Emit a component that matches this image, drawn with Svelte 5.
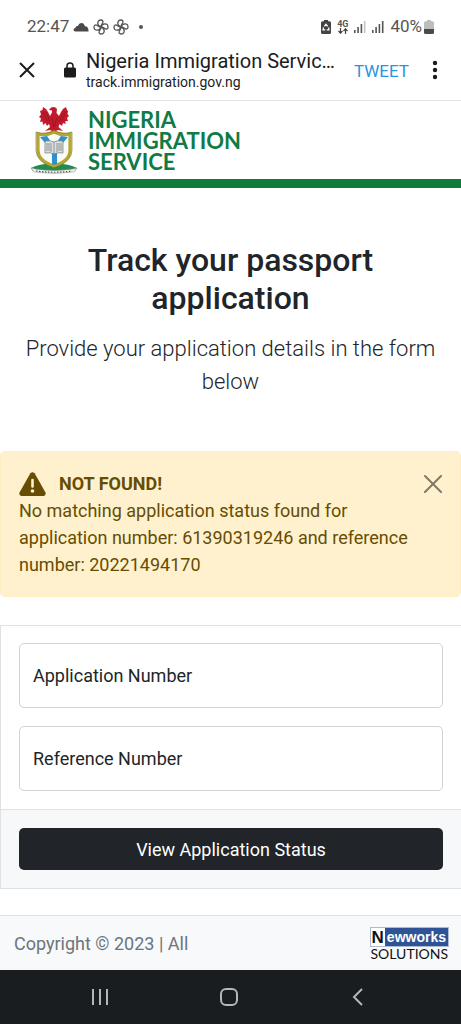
<script>
  let applicationNumber = $state('')
  let referenceNumber = $state('')
  let showAlert = $state(true)
  const bars = [3, 6, 9, 12]
</script>

{#snippet fan()}
  <svg viewBox="0 0 16 16" width="16" height="16" fill="none" stroke="#555" stroke-width="1.3" stroke-linejoin="round">
    {#each [0, 90, 180, 270] as angle}
      <path transform="rotate({angle} 8 8)" d="M8 8C6 7.500 4.800 6 4.800 4C4.800 2 6 1 8 1C9.800 1 10.300 2.300 9.800 3.600C9.300 5 8 5.600 8 8Z" />
    {/each}
  </svg>
{/snippet}

{#snippet signal(weak)}
  <svg viewBox="0 0 12 13" width="12" height="13" fill="#555">
    {#each bars as height, i}
      <rect x={i * 3.3} y={13 - height} width="1.6" {height} opacity={weak && i === 3 ? 0.35 : 1} />
    {/each}
  </svg>
{/snippet}

<div class="status">
  <div class="status-group">
    <span>22:47</span>
    <svg viewBox="0 0 16 10" width="16" height="10" fill="#4a4a4a"><path d="M2.500 9.500C0 9.500 0 6.300 2.300 6C2.500 4.200 4 3.600 5 4C6.200-.3 11.300.2 11.800 4.300C14 4.100 15.600 6 15.600 9.500Z" /></svg>
    {@render fan()}
    {@render fan()}
    <i class="dot"></i>
  </div>
  <div class="status-group right">
    <svg viewBox="0 0 10 14" width="10" height="14">
      <path fill="#444" d="M3 0h4v1.300h1.500Q10 1.300 10 2.800v9.700Q10 14 8.500 14h-7Q0 14 0 12.500V2.800Q0 1.300 1.500 1.300H3Z" />
      <path fill="none" stroke="#fff" stroke-width="1.200" d="M3.300 6.300L5 4.200L6.700 6.300M7.600 7.400L8 9.800H5.800M4.300 9.800H2L2.500 7.400" />
    </svg>
    <span class="network">
      <b>4G</b>
      <svg viewBox="0 0 10 6" width="10" height="6" fill="none" stroke="#444" stroke-width="1.200"><path d="M2.500 0v5M.5 3l2 2.200L4.500 3M7.500 6V1M5.500 3l2-2.200L9.500 3" /></svg>
    </span>
    {@render signal(true)}
    {@render signal(false)}
    <span class="battery">
      40%
      <svg viewBox="0 0 10 14" width="10" height="14">
        <path fill="#bdbdbd" d="M3 0h4v1.300h1.500Q10 1.300 10 2.800V9H0V2.800Q0 1.300 1.500 1.300H3Z" />
        <path fill="#4a4a4a" d="M0 9h10v3.500Q10 14 8.500 14h-7Q0 14 0 12.500Z" />
      </svg>
    </span>
  </div>
</div>

<div class="toolbar">
  <button class="icon-btn" aria-label="Close tab">
    <svg viewBox="0 0 16 16" width="16" height="16" fill="none" stroke="#1c1c1e" stroke-width="2"><path d="M1 1l14 14M15 1L1 15" /></svg>
  </button>
  <svg class="lock" viewBox="0 0 12 16" width="12" height="16">
    <path fill="none" stroke="#1c1c1e" stroke-width="1.500" d="M3 7V4a3 3 0 0 1 6 0v3" />
    <rect y="5.500" width="12" height="10" rx="1.500" fill="#1c1c1e" />
  </svg>
  <div class="page-info">
    <div class="page-title">Nigeria Immigration Servic…</div>
    <div class="page-url">track.immigration.gov.ng</div>
  </div>
  <button class="tweet">TWEET</button>
  <button class="icon-btn" aria-label="More options">
    <svg viewBox="0 0 6 20" width="6" height="20" fill="#1c1c1e"><circle cx="3" cy="3" r="2.200" /><circle cx="3" cy="10" r="2.200" /><circle cx="3" cy="17" r="2.200" /></svg>
  </button>
</div>

<header>
  <svg viewBox="0 0 48 68" width="48" height="68">
    <!-- eagle -->
    <path fill="#c3192b" d="M19 4L21 1.500Q25 0 27 3L26.500 7L29 10L31 6L33 3L36 1L37 4L38 5L37.500 8L39 10L37 12L38 15L35.500 15L35.500 18L33 17L32 20L29.500 18L28.500 21L33 25L28 24L24 26L20 24L15 25L20 21L19 18L17 20L15.500 17L13 19L12.500 15.500L10 16L11 12.500L9 11L11 8.500L10 5L12.500 4L13 1L16 3L18 6L20 10L22 6.500L22 4.500Z" />
    <path fill="none" stroke="#8a1522" stroke-width=".7" d="M13 6l4 9M16 6l4 10M36 5l-4 10M33 7l-4 9M22 12l2 9l3-9" />
    <path fill="#238b50" d="M1 62Q12 57 24 58Q36 57 47 62L45 65H3Z" />
    <!-- shield -->
    <path fill="#f8fbf8" stroke="#b7a62d" stroke-width="3.200" d="M8 28Q16 30 24 26Q32 30 40 28V44Q40 55 24 60Q8 55 8 44Z" />
    <path fill="none" stroke="#69732e" stroke-width=".6" d="M6 26Q16 29 24 24.500Q32 29 42 26V44Q42 56 24 62Q6 56 6 44Z" />
    <path fill="#2c91ce" d="M10 31L17 30L21 36L16 38ZM38 31L31 30L27 36L32 38ZM22 47h5v11l-3 1l-2-1Z" />
    <path fill="#dde0df" stroke="#707575" stroke-width=".7" d="M15 35Q20 34 24 36Q28 34 33 35V47Q28 46 24 48Q20 46 15 47Z" />
    <path fill="none" stroke="#7b8080" stroke-width=".8" d="M24 36v12M17 37v8M19 37v8M21 37v9M27 37v9M29 37v8M31 37v8" />
    <path fill="#f2f2ef" stroke="#888" stroke-width=".5" d="M1 62Q3 62 5 63Q24 66 43 63L47 62L44 66Q24 69 4 66Z" />
    <path fill="none" stroke="#555" stroke-width="1.200" stroke-dasharray="1.500 1.500" d="M6 65Q24 67.500 42 65" />
  </svg>
  <div class="brand">NIGERIA<br />IMMIGRATION<br />SERVICE</div>
</header>

<main>
  <section class="intro">
    <h1>Track your passport application</h1>
    <p>Provide your application details in the form below</p>
  </section>

  {#if showAlert}
    <div class="alert" role="alert">
      <div class="alert-head">
        <svg viewBox="0 0 27 24" width="27" height="24">
          <path fill="#664d03" d="M11.400 1.300Q13.500-.9 15.600 1.300L26.500 20.500Q27.300 23.500 24.600 24H2.400Q-.3 23.500.5 20.500Z" />
          <path stroke="#fff3cd" stroke-width="2.600" stroke-linecap="round" d="M13.500 8v6.500" />
          <circle cx="13.500" cy="19" r="1.800" fill="#fff3cd" />
        </svg>
        <strong>NOT FOUND!</strong>
        <button class="icon-btn dismiss" aria-label="Close" onclick={() => showAlert = false}>
          <svg viewBox="0 0 18 18" width="18" height="18" fill="none" stroke="#807966" stroke-width="2" stroke-linecap="round"><path d="M1 1l16 16M17 1L1 17" /></svg>
        </button>
      </div>
      <p>No matching application status found for application number: 61390319246 and reference number: 20221494170</p>
    </div>
  {/if}

  <form class="card" onsubmit={(e) => e.preventDefault()}>
    <div class="card-body">
      <div class="field">
        <input id="application" type="text" bind:value={applicationNumber} />
        <label for="application" class:filled={applicationNumber}>Application Number</label>
      </div>
      <div class="field">
        <input id="reference" type="text" bind:value={referenceNumber} />
        <label for="reference" class:filled={referenceNumber}>Reference Number</label>
      </div>
    </div>
    <div class="card-footer">
      <button class="submit">View Application Status</button>
    </div>
  </form>
</main>

<footer>
  <span>Copyright © 2023 | All</span>
  <div class="newworks">
    <div class="newworks-top"><b>N</b><span>ewworks</span></div>
    <div class="newworks-bottom">SOLUTIONS</div>
  </div>
</footer>

<nav>
  <button class="icon-btn" aria-label="Recent apps">
    <svg viewBox="0 0 18 18" width="18" height="18" stroke="#b4b6b7" stroke-width="2"><path d="M2 1v16M9 1v16M16 1v16" /></svg>
  </button>
  <button class="icon-btn" aria-label="Home">
    <svg viewBox="0 0 20 20" width="20" height="20" fill="none" stroke="#b4b6b7" stroke-width="2"><rect x="2" y="2" width="16" height="16" rx="5" /></svg>
  </button>
  <button class="icon-btn" aria-label="Back">
    <svg viewBox="0 0 18 18" width="18" height="18" fill="none" stroke="#b4b6b7" stroke-width="2"><path d="M13 1L5 9l8 8" /></svg>
  </button>
</nav>

<style>
  :global(body) {
    margin: 0;
    background: #fff;
    color: #212529;
    font: 18px/27px Roboto, sans-serif;
  }
  button, input {
    font: inherit;
  }
  p {
    margin: 0;
  }
  svg {
    display: block;
    flex-shrink: 0;
  }
  .icon-btn {
    display: flex;
    align-items: center;
    justify-content: center;
    padding: 0;
    border: 0;
    background: none;
  }
  .status {
    display: flex;
    justify-content: space-between;
    padding: 13px 27px 0;
    color: #555;
    font-size: 17px;
  }
  .status-group {
    display: flex;
    align-items: center;
    gap: 4px;
  }
  .status-group.right {
    gap: 6px;
  }
  .dot {
    width: 4px;
    height: 4px;
    margin-left: 6px;
    border-radius: 50%;
    background: #555;
  }
  .network {
    display: flex;
    flex-direction: column;
    align-items: center;
    font-size: 9px;
    line-height: 8px;
  }
  .battery {
    display: flex;
    align-items: center;
    gap: 2px;
  }
  .toolbar {
    display: flex;
    align-items: center;
    height: 60px;
    padding: 0 23px 0 19px;
    border-bottom: 1px solid #e4e6e6;
    color: #1c1c1e;
  }
  .lock {
    margin: 0 10px 0 29px;
  }
  .page-info {
    flex: 1;
    min-width: 0;
  }
  .page-title {
    overflow: hidden;
    font-size: 20px;
    line-height: 24px;
    white-space: nowrap;
  }
  .page-url {
    font-size: 14px;
    line-height: 18px;
  }
  .tweet {
    margin-right: 23px;
    padding: 2px 0 0;
    border: 0;
    background: none;
    color: #2a94e0;
    font-size: 17px;
  }
  header {
    display: flex;
    align-items: center;
    gap: 10px;
    height: 78px;
    padding: 0 30px;
    border-bottom: 9px solid #0f7b3a;
  }
  .brand {
    color: #0f7b45;
    font: 700 22px/21px Lato, sans-serif;
  }
  .intro {
    padding: 53px 18px;
    text-align: center;
  }
  h1 {
    margin: 0 0 15px;
    font-size: 32px;
    font-weight: 500;
    line-height: 38px;
  }
  .intro p {
    font-size: 22px;
    font-weight: 300;
    line-height: 33px;
  }
  .alert {
    margin-bottom: 28px;
    padding: 18px;
    border: 1px solid #ffecc0;
    border-radius: 5px;
    background: #fff1cd;
    color: #664d03;
  }
  .alert p {
    padding-right: 27px;
  }
  .alert-head {
    display: flex;
    align-items: center;
    gap: 13px;
  }
  .alert-head strong {
    font-weight: 700;
  }
  .dismiss {
    margin-left: auto;
  }
  .card {
    border: 1px solid #dfe1e3;
    border-right: 0;
  }
  .card-body {
    display: grid;
    gap: 18px;
    padding: 17px 18px 18px;
  }
  .field {
    display: grid;
  }
  .field > * {
    grid-area: 1 / 1;
  }
  .field input {
    box-sizing: border-box;
    width: 100%;
    height: 65px;
    padding: 0 14px;
    border: 1px solid #ced4da;
    border-radius: 5px;
    background: #fff;
    color: #212529;
  }
  .field label {
    align-self: center;
    padding-left: 14px;
    pointer-events: none;
  }
  .field label.filled {
    visibility: hidden;
  }
  .card-footer {
    padding: 18px;
    border-top: 1px solid #dfe1e3;
    background: #f7f8fa;
  }
  .submit {
    width: 100%;
    height: 42px;
    border: 0;
    border-radius: 5px;
    background: #212529;
    color: #fff;
  }
  footer {
    display: flex;
    align-items: center;
    justify-content: space-between;
    height: 54px;
    margin-top: 26px;
    padding: 0 12px 0 14px;
    border-top: 1px solid #dfe1e3;
    background: #f8f9fa;
    color: #6c757d;
  }
  .newworks {
    padding-top: 2px;
    color: #111;
    font-family: "Liberation Sans", Arial, sans-serif;
  }
  .newworks-top {
    display: flex;
    height: 20px;
    border: 1px solid #aebbd5;
    box-sizing: border-box;
    background: #2f5496;
    line-height: 19px;
  }
  .newworks-top b {
    padding: 0 1px;
    background: #fff;
    font-size: 17px;
  }
  .newworks-top span {
    padding: 0 2px;
    color: #fff;
    font-size: 14px;
    font-weight: 700;
  }
  .newworks-bottom {
    font: 14px/14px Lato, sans-serif;
    text-align: center;
  }
  nav {
    display: flex;
    align-items: center;
    justify-content: center;
    gap: 110px;
    height: 54px;
    padding-right: 4px;
    background: #1a1d20;
  }
</style>
